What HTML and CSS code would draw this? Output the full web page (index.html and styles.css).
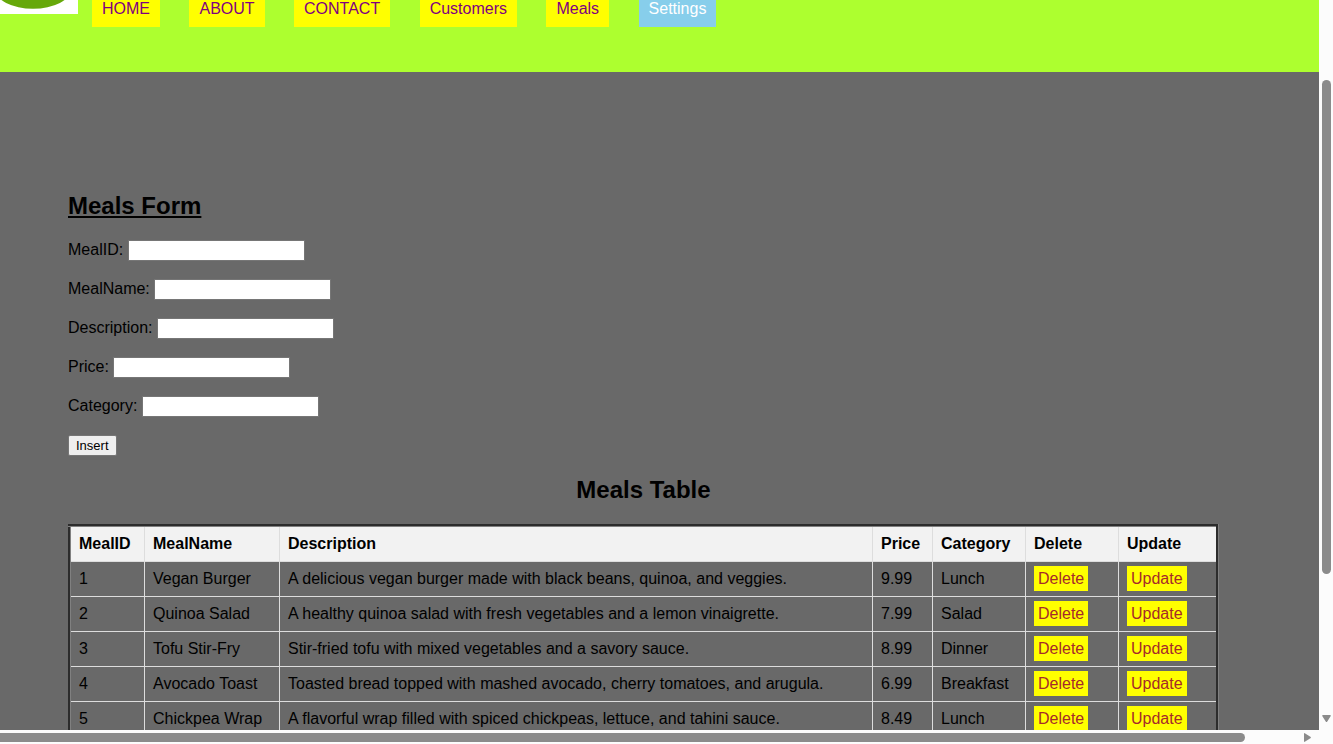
FILE: index.html
```html
<!DOCTYPE html>
<html lang="en">
<head>
<meta charset="utf-8">
<title>Meals</title>
<link rel="stylesheet" href="styles.css">
</head>
<body>
<div class="window">
  <div class="page">
    <header class="header">
      <svg class="logo" width="78" height="14" viewBox="0 0 78 14" aria-hidden="true">
        <rect width="78" height="14" fill="#fff"/>
        <ellipse cx="33" cy="-11" rx="38" ry="19.700" fill="#66a80a"/>
      </svg>
      <nav class="nav">
        <a href="#">HOME</a>
        <a href="#">ABOUT</a>
        <a href="#">CONTACT</a>
        <a href="#">Customers</a>
        <a href="#">Meals</a>
        <a href="#" class="settings">Settings</a>
      </nav>
    </header>
    <main class="content">
      <h2 class="form-title">Meals Form</h2>
      <form class="form">
        <div class="field"><label for="id">MealID:</label> <input type="text" id="id"></div>
        <div class="field"><label for="name">MealName:</label> <input type="text" id="name"></div>
        <div class="field"><label for="desc">Description:</label> <input type="text" id="desc"></div>
        <div class="field"><label for="price">Price:</label> <input type="text" id="price"></div>
        <div class="field"><label for="cat">Category:</label> <input type="text" id="cat"></div>
        <button type="button" class="insert">Insert</button>
      </form>
      <h2 class="table-title">Meals Table</h2>
      <table class="meals">
        <colgroup>
          <col class="col-id"><col class="col-name"><col><col class="col-price"><col class="col-cat"><col class="col-delete"><col class="col-update">
        </colgroup>
        <thead>
          <tr><th>MealID</th><th>MealName</th><th>Description</th><th>Price</th><th>Category</th><th>Delete</th><th>Update</th></tr>
        </thead>
        <tbody>
          <tr><td>1</td><td>Vegan Burger</td><td>A delicious vegan burger made with black beans, quinoa, and veggies.</td><td>9.99</td><td>Lunch</td><td><a href="#">Delete</a></td><td><a href="#">Update</a></td></tr>
          <tr><td>2</td><td>Quinoa Salad</td><td>A healthy quinoa salad with fresh vegetables and a lemon vinaigrette.</td><td>7.99</td><td>Salad</td><td><a href="#">Delete</a></td><td><a href="#">Update</a></td></tr>
          <tr><td>3</td><td>Tofu Stir-Fry</td><td>Stir-fried tofu with mixed vegetables and a savory sauce.</td><td>8.99</td><td>Dinner</td><td><a href="#">Delete</a></td><td><a href="#">Update</a></td></tr>
          <tr><td>4</td><td>Avocado Toast</td><td>Toasted bread topped with mashed avocado, cherry tomatoes, and arugula.</td><td>6.99</td><td>Breakfast</td><td><a href="#">Delete</a></td><td><a href="#">Update</a></td></tr>
          <tr><td>5</td><td>Chickpea Wrap</td><td>A flavorful wrap filled with spiced chickpeas, lettuce, and tahini sauce.</td><td>8.49</td><td>Lunch</td><td><a href="#">Delete</a></td><td><a href="#">Update</a></td></tr>
        </tbody>
      </table>
    </main>
  </div>
  <div class="bar bar-v">
    <div class="thumb"></div>
    <svg width="9" height="7" viewBox="0 0 9 7" aria-hidden="true"><path d="M1 0H8Q9.400 0 8.600 1.200L5.300 6.400Q4.500 7.400 3.700 6.400L.4 1.200Q-.4 0 1 0Z" fill="#8b8b8b"/></svg>
  </div>
  <div class="bar bar-h">
    <div class="thumb"></div>
    <svg width="7" height="9" viewBox="0 0 7 9" aria-hidden="true"><path d="M0 1V8Q0 9.400 1.200 8.600L6.400 5.300Q7.400 4.500 6.400 3.700L1.200 .4Q0-.4 0 1Z" fill="#8b8b8b"/></svg>
  </div>
  <div class="corner"></div>
</div>
</body>
</html>
```
FILE: styles.css
```css
body {
  margin: 0;
  font-family: "Liberation Sans", Arial, sans-serif;
  font-size: 16px;
  line-height: 18px;
  color: #000;
}

.window {
  display: grid;
  grid-template-columns: minmax(0, 1fr) 14px;
  grid-template-rows: minmax(0, 1fr) 14px;
  height: 100vh;
}

.page {
  overflow: hidden;
  background: dimgray;
}

.header {
  display: flex;
  align-items: flex-start;
  gap: 14px;
  padding-bottom: 45px;
  background: greenyellow;
}

.logo {
  display: block;
  flex: none;
}

.nav {
  line-height: 17px;
}

.nav a {
  display: inline-block;
  margin-right: 25px;
  padding: 0 10px 10px;
  background: yellow;
  color: purple;
  text-decoration: none;
}

.nav .settings {
  background: skyblue;
  color: #fff;
}

.content {
  padding: 120px 100px 0 68px;
}

h2 {
  margin: 0;
  font-size: 24px;
  line-height: 28px;
}

.form-title {
  text-decoration: underline;
}

.form {
  display: flex;
  flex-direction: column;
  align-items: flex-start;
  gap: 18px;
  margin: 20px 0;
}

.field input {
  box-sizing: border-box;
  width: 177px;
  height: 21px;
  margin: 0;
  padding: 1px 2px;
  border: 1px solid #767676;
  background: #fff;
  font: 13px "Liberation Sans", Arial, sans-serif;
}

.insert {
  box-sizing: border-box;
  height: 21px;
  padding: 0 7px;
  border: 1px solid #767676;
  border-radius: 2px;
  background: #efefef;
  color: #000;
  font: 13px "Liberation Sans", Arial, sans-serif;
}

.table-title {
  margin-bottom: 20px;
  text-align: center;
}

.meals {
  width: 100%;
  border: 3px groove gray;
  border-collapse: collapse;
  table-layout: fixed;
}

.col-id {
  width: 75px;
}

.col-name {
  width: 135px;
}

.col-price {
  width: 60px;
}

.col-cat,
.col-delete {
  width: 93px;
}

.col-update {
  width: 99px;
}

.meals th,
.meals td {
  padding: 8px;
  border: 1px solid #ddd;
  text-align: left;
}

.meals th {
  background: #f2f2f2;
}

.meals a {
  padding: 4px;
  background: yellow;
  color: brown;
  text-decoration: none;
}

.bar {
  display: flex;
  justify-content: space-between;
  background: #fcfcfc;
}

.bar-v {
  flex-direction: column;
  padding: 80px 2px 8px 3px;
}

.bar-h {
  grid-row: 2;
  padding: 3px 8px 2px 0;
}

.thumb {
  background: #8b8b8b;
}

.bar-v .thumb {
  height: 77%;
  border-radius: 5px;
}

.bar-h .thumb {
  width: 95%;
  border-radius: 0 5px 5px 0;
}

.corner {
  background: #fcfcfc;
}
```
